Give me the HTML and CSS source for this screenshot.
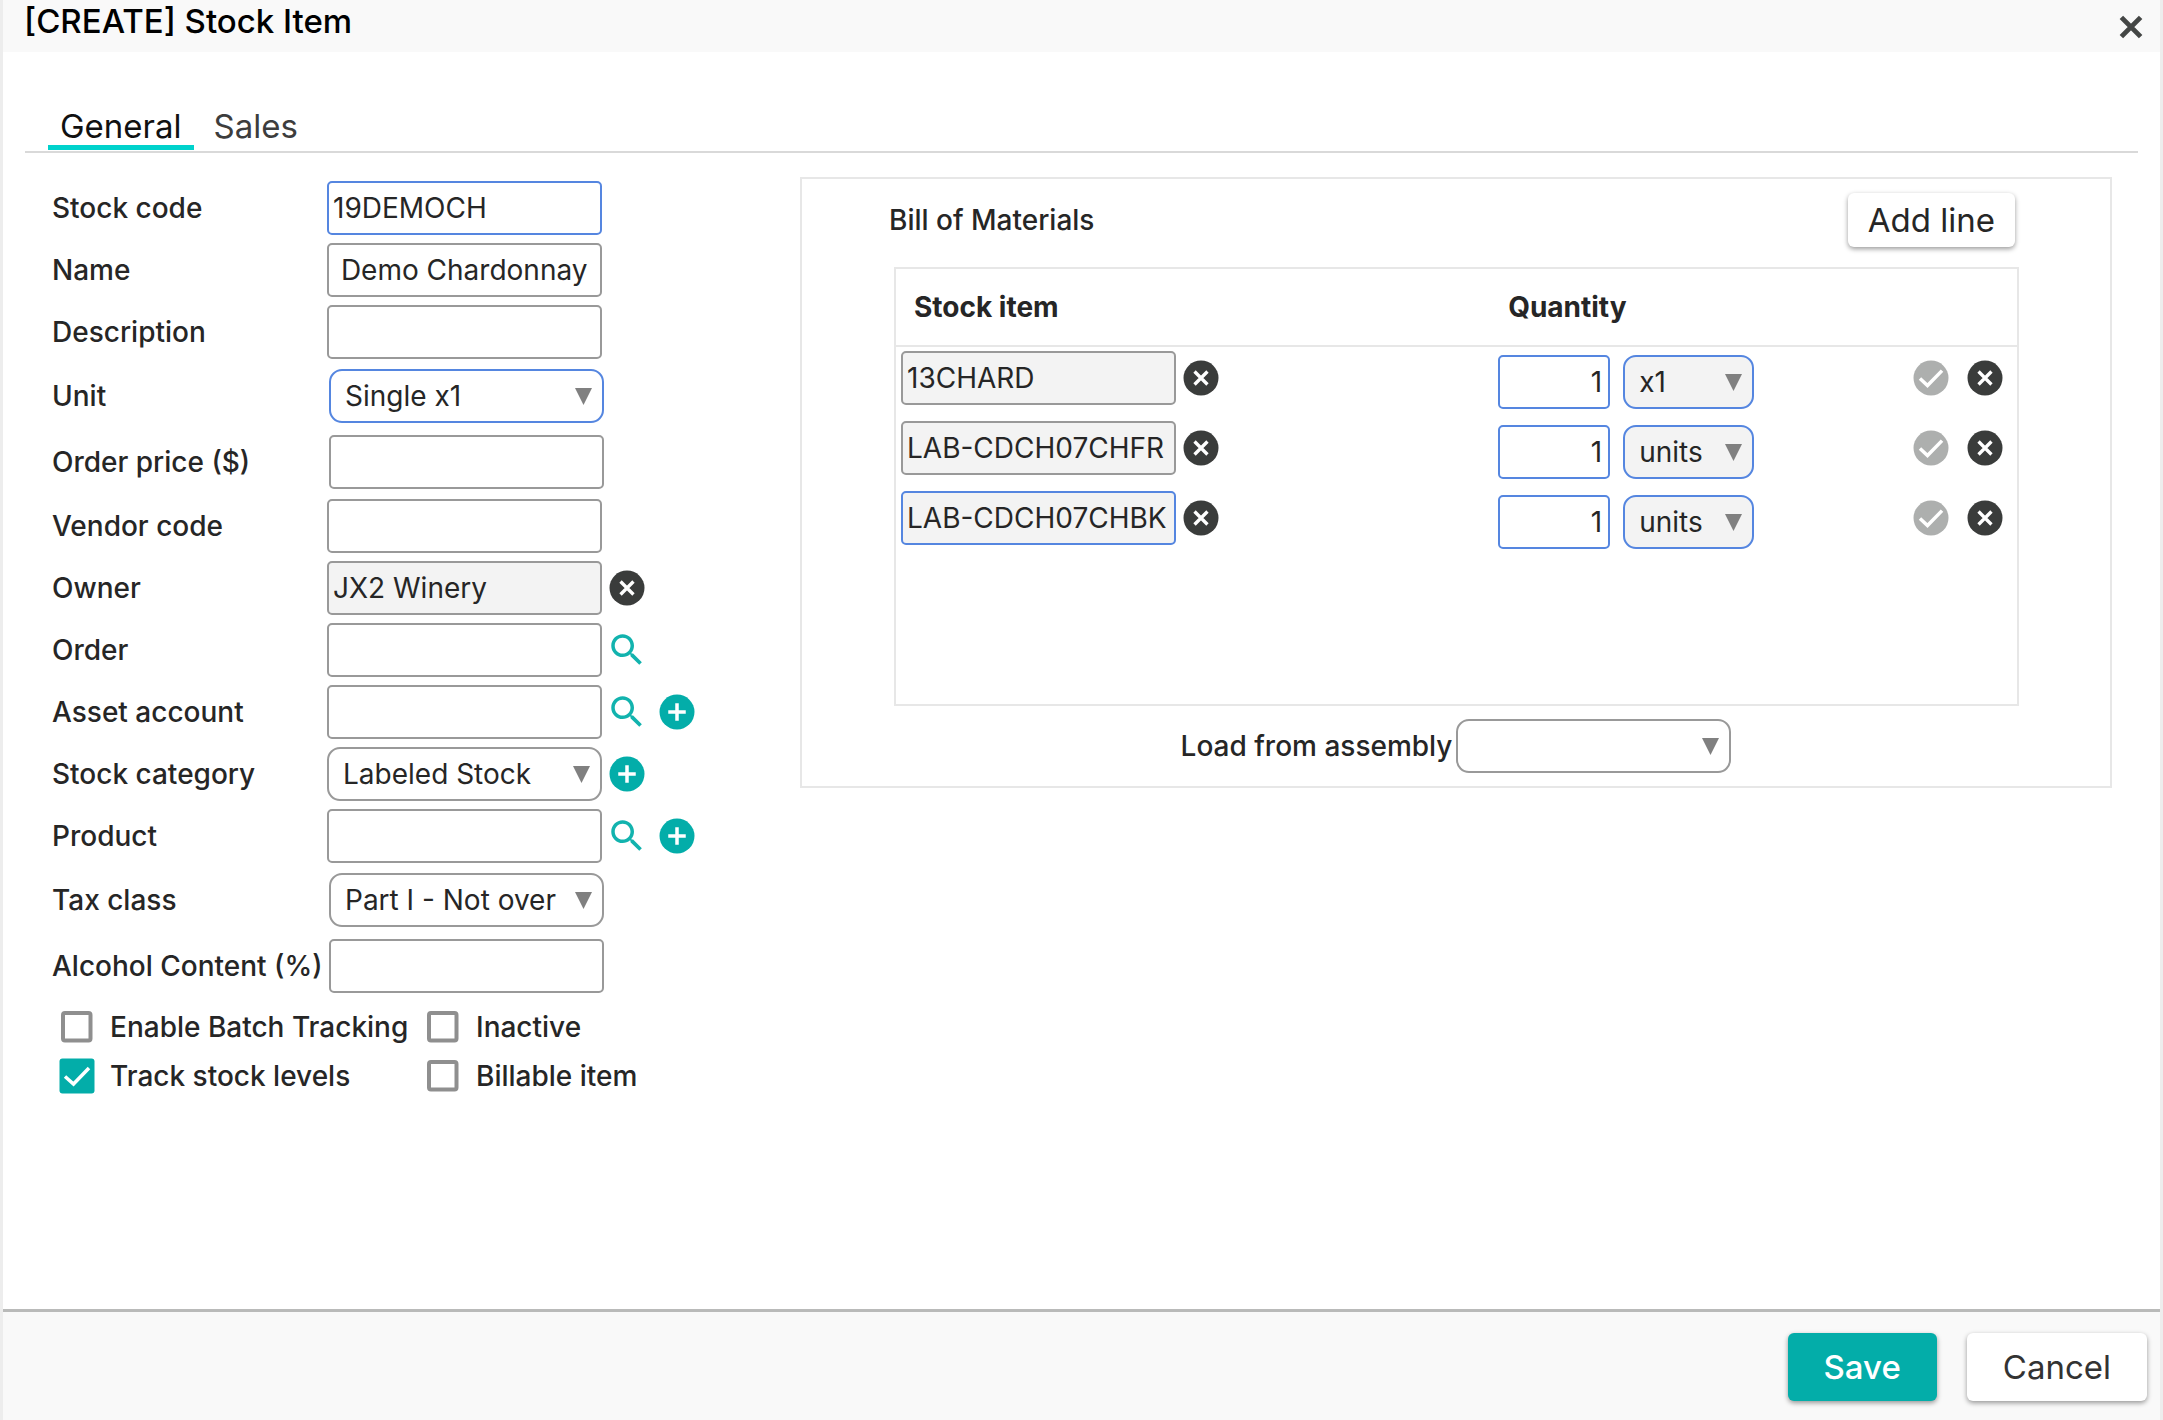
FILE: index.html
```
<!DOCTYPE html>
<html lang="en">
<head>
<meta charset="utf-8">
<meta name="viewport" content="width=device-width, initial-scale=1">
<title>[CREATE] Stock Item</title>
<link rel="stylesheet" href="styles.css">
</head>
<body>
<svg class="sprite" aria-hidden="true">
  <symbol id="i-clear" viewBox="0 0 24 24"><circle cx="12" cy="12" r="10" fill="#3a3c3b"/><path d="M8.300 8.300l7.400 7.400M15.700 8.300l-7.400 7.400" stroke="#fff" stroke-width="1.900" fill="none"/></symbol>
  <symbol id="i-plus" viewBox="0 0 24 24"><circle cx="12" cy="12" r="10" fill="#03ada9"/><path d="M12 7v10M7 12h10" stroke="#fff" stroke-width="2" fill="none"/></symbol>
  <symbol id="i-check" viewBox="0 0 24 24"><circle cx="12" cy="12" r="10" fill="#adafae"/><path d="M5.700 12.300L10 16.300L18.300 7.800" stroke="#fff" stroke-width="2" fill="none"/></symbol>
  <symbol id="i-search" viewBox="0 0 24 24"><path fill="#12b3ae" d="M15.500 14h-.79l-.28-.27C15.410 12.590 16 11.110 16 9.500 16 5.910 13.090 3 9.500 3S3 5.910 3 9.500 5.910 16 9.500 16c1.610 0 3.090-.59 4.230-1.570l.27.28v.79l5 4.990L20.490 19l-4.990-5zm-6 0C7.010 14 5 11.990 5 9.500S7.010 5 9.500 5 14 7.010 14 9.500 11.990 14 9.500 14z"/></symbol>
  <symbol id="i-close" viewBox="0 0 24 24"><path d="M6.500 6.500l11 11M17.500 6.500L6.500 17.500" stroke="#444645" stroke-width="2.800" fill="none"/></symbol>
</svg>
<div class="dialog">
  <header class="titlebar">
    <h1>[CREATE] Stock Item</h1>
    <button class="icon-btn close" type="button" aria-label="Close"><svg><use href="#i-close"/></svg></button>
  </header>

  <nav class="tabs">
    <button class="tab active" type="button">General</button>
    <button class="tab" type="button">Sales</button>
  </nav>

  <main class="content">
    <form class="fields">
      <div class="row"><label for="code">Stock code</label><input class="box focus" id="code" type="text" value="19DEMOCH"></div>
      <div class="row"><label for="name">Name</label><input class="box" id="name" type="text" value=" Demo Chardonnay"></div>
      <div class="row"><label for="desc">Description</label><input class="box" id="desc" type="text"></div>
      <div class="row inset"><label for="unit">Unit</label><select class="box pick focus" id="unit"><option>Single x1</option></select></div>
      <div class="row inset"><label for="price">Order price ($)</label><input class="box" id="price" type="text"></div>
      <div class="row"><label for="vendor">Vendor code</label><input class="box" id="vendor" type="text"></div>
      <div class="row"><label for="owner">Owner</label><input class="box filled" id="owner" type="text" value="JX2 Winery" readonly>
        <span class="tools"><button class="icon-btn" type="button" aria-label="Clear owner"><svg><use href="#i-clear"/></svg></button></span></div>
      <div class="row"><label for="order">Order</label><input class="box" id="order" type="text">
        <span class="tools"><button class="icon-btn" type="button" aria-label="Find order"><svg><use href="#i-search"/></svg></button></span></div>
      <div class="row"><label for="asset">Asset account</label><input class="box" id="asset" type="text">
        <span class="tools"><button class="icon-btn" type="button" aria-label="Find account"><svg><use href="#i-search"/></svg></button><button class="icon-btn" type="button" aria-label="Add account"><svg><use href="#i-plus"/></svg></button></span></div>
      <div class="row"><label for="category">Stock category</label><select class="box pick" id="category"><option>Labeled Stock</option></select>
        <span class="tools"><button class="icon-btn" type="button" aria-label="Add category"><svg><use href="#i-plus"/></svg></button></span></div>
      <div class="row"><label for="product">Product</label><input class="box" id="product" type="text">
        <span class="tools"><button class="icon-btn" type="button" aria-label="Find product"><svg><use href="#i-search"/></svg></button><button class="icon-btn" type="button" aria-label="Add product"><svg><use href="#i-plus"/></svg></button></span></div>
      <div class="row inset"><label for="tax">Tax class</label><select class="box pick" id="tax"><option>Part I - Not over</option></select></div>
      <div class="row inset"><label for="alcohol">Alcohol Content (%)</label><input class="box" id="alcohol" type="text"></div>
      <div class="checks">
        <label><input type="checkbox">Enable Batch Tracking</label>
        <label><input type="checkbox">Inactive</label>
        <label><input type="checkbox" checked>Track stock levels</label>
        <label><input type="checkbox">Billable item</label>
      </div>
    </form>

    <section class="panel">
      <div class="panel-head">
        <h2>Bill of Materials</h2>
        <button class="btn small" type="button">Add line</button>
      </div>
      <div class="grid-box">
        <table>
          <thead><tr><th class="c-item">Stock item</th><th class="c-qty">Quantity</th><th class="c-act"></th></tr></thead>
          <tbody>
            <tr>
              <td><div class="cell"><input class="box filled" type="text" value="13CHARD" aria-label="Stock item" readonly><button class="icon-btn" type="button" aria-label="Clear item"><svg><use href="#i-clear"/></svg></button></div></td>
              <td><div class="cell qty"><input class="box focus num" type="text" value="1" aria-label="Quantity"><select class="box pick filled focus unit" aria-label="Unit"><option>x1</option></select></div></td>
              <td><div class="cell act"><button class="icon-btn" type="button" aria-label="Confirm"><svg><use href="#i-check"/></svg></button><button class="icon-btn" type="button" aria-label="Remove line"><svg><use href="#i-clear"/></svg></button></div></td>
            </tr>
            <tr>
              <td><div class="cell"><input class="box filled" type="text" value="LAB-CDCH07CHFR" aria-label="Stock item" readonly><button class="icon-btn" type="button" aria-label="Clear item"><svg><use href="#i-clear"/></svg></button></div></td>
              <td><div class="cell qty"><input class="box focus num" type="text" value="1" aria-label="Quantity"><select class="box pick filled focus unit" aria-label="Unit"><option>units</option></select></div></td>
              <td><div class="cell act"><button class="icon-btn" type="button" aria-label="Confirm"><svg><use href="#i-check"/></svg></button><button class="icon-btn" type="button" aria-label="Remove line"><svg><use href="#i-clear"/></svg></button></div></td>
            </tr>
            <tr>
              <td><div class="cell"><input class="box filled focus" type="text" value="LAB-CDCH07CHBK" aria-label="Stock item" readonly><button class="icon-btn" type="button" aria-label="Clear item"><svg><use href="#i-clear"/></svg></button></div></td>
              <td><div class="cell qty"><input class="box focus num" type="text" value="1" aria-label="Quantity"><select class="box pick filled focus unit" aria-label="Unit"><option>units</option></select></div></td>
              <td><div class="cell act"><button class="icon-btn" type="button" aria-label="Confirm"><svg><use href="#i-check"/></svg></button><button class="icon-btn" type="button" aria-label="Remove line"><svg><use href="#i-clear"/></svg></button></div></td>
            </tr>
          </tbody>
        </table>
      </div>
      <div class="assembly"><label for="assembly">Load from assembly</label><select class="box pick" id="assembly"><option></option></select></div>
    </section>
  </main>

  <footer class="actions">
    <button class="btn primary" type="button">Save</button>
    <button class="btn" type="button">Cancel</button>
  </footer>
</div>
</body>
</html>
```
FILE: styles.css
```
* { box-sizing: border-box; }

body {
  margin: 0;
  background: #fff;
  color: #262626;
  font: 500 28px/32px Inter, "Liberation Sans", sans-serif;
}

button, input, select { font: inherit; color: inherit; margin: 0; }
button { border: 0; padding: 0; background: none; cursor: pointer; }
h1, h2 { margin: 0; font-weight: 500; }
.sprite { display: none; }

.dialog {
  display: flex;
  flex-direction: column;
  min-height: 100vh;
  border: solid #ededed;
  border-width: 0 3px;
}

/* title bar */
.titlebar {
  display: flex;
  justify-content: space-between;
  align-items: flex-start;
  height: 52px;
  padding: 0 8px 0 21px;
  background: #f9f9f9;
}
.titlebar h1 { font-size: 33px; line-height: 42px; color: #000; }
.close { margin-top: 6px; }

.icon-btn { flex: none; width: 42px; height: 42px; }
.icon-btn svg { display: block; width: 42px; height: 42px; }

/* tabs */
.tabs {
  display: flex;
  gap: 8px;
  margin: 48px 22px 0;
  padding: 0 23px 1px;
  border-bottom: 2px solid #d9d9d9;
}
.tab {
  height: 50px;
  padding: 6px 12px 0;
  border-bottom: 5px solid transparent;
  font-size: 33px;
  font-weight: 400;
  color: #3d3d3d;
}
.tab.active { border-color: #00d2cc; color: #111; }

.content {
  flex: 1;
  display: grid;
  grid-template-columns: 748px minmax(0, 1fr);
  align-items: start;
  padding: 24px 48px 24px 49px;
}

/* inputs */
.box {
  flex: none;
  width: 275px;
  height: 54px;
  padding: 0 4px;
  border: 2px solid #999;
  border-radius: 5px;
  background-color: #fff;
  font-weight: 400;
  outline: 0;
}
.box.focus { border-color: #5586e0; }
.box.filled { background-color: #f3f3f3; }
.pick {
  appearance: none;
  padding: 0 32px 0 14px;
  border-radius: 13px;
  background-image: url("data:image/svg+xml,%3Csvg xmlns='http://www.w3.org/2000/svg' viewBox='0 0 17 17'%3E%3Cpath d='M0 0h17L8.500 17z' fill='%23808080'/%3E%3C/svg%3E");
  background-repeat: no-repeat;
  background-position: right 10px center;
  background-size: 17px 17px;
}

/* form */
.fields { display: flex; flex-direction: column; gap: 8px; padding-top: 4px; }
.row { display: flex; align-items: center; }
.row > label { flex: none; width: 275px; white-space: nowrap; }
.row.inset .box { margin: 2px; }
.tools { display: flex; gap: 8px; margin-left: 4px; }

.checks {
  display: grid;
  grid-template-columns: 366px max-content;
  gap: 7px 0;
  padding: 3px 0 0 4px;
}
.checks label { display: flex; align-items: center; gap: 12px; white-space: nowrap; }
.checks input {
  appearance: none;
  flex: none;
  width: 42px;
  height: 42px;
  background: url("data:image/svg+xml,%3Csvg xmlns='http://www.w3.org/2000/svg' viewBox='0 0 42 42'%3E%3Crect x='7' y='7' width='27.500' height='27.500' rx='2' fill='%23fff' stroke='%238f8f8f' stroke-width='4'/%3E%3C/svg%3E");
}
.checks input:checked {
  background-image: url("data:image/svg+xml,%3Csvg xmlns='http://www.w3.org/2000/svg' viewBox='0 0 42 42'%3E%3Crect x='3.500' y='3.500' width='35' height='35' rx='3' fill='%2303ada9'/%3E%3Cpath d='M9 21.500L17.500 29L33 13' fill='none' stroke='%23fff' stroke-width='3.500'/%3E%3C/svg%3E");
}

/* bill of materials */
.panel { border: 2px solid #e7e7e7; padding: 14px 0 13px; }
.panel-head {
  display: flex;
  justify-content: space-between;
  align-items: center;
  margin: 0 95px 20px 87px;
}
.panel-head h2 { font-size: 28px; }
.grid-box { min-height: 439px; margin: 0 91px 13px 92px; border: 2px solid #e7e7e7; }
table { width: 100%; table-layout: fixed; border-collapse: separate; border-spacing: 0; }
th {
  height: 78px;
  padding: 0 18px;
  border-bottom: 2px solid #e7e7e7;
  text-align: left;
  font-weight: 700;
}
.c-item { width: 53%; }
.c-qty { width: 30%; }
td { height: 70px; padding: 0; vertical-align: top; }
.cell { display: flex; align-items: center; gap: 4px; padding: 4px 0 0 5px; }
.cell.qty { gap: 13px; padding: 8px 0 0 8px; }
.cell.act { gap: 12px; padding: 10px 11px 0 0; justify-content: flex-end; }
.num { width: 112px; padding: 0 6px; text-align: right; }
.unit { width: 131px; }

.assembly { display: flex; align-items: center; justify-content: center; gap: 4px; }

/* buttons */
.btn {
  height: 68px;
  padding: 0 36px;
  border-radius: 6px;
  background: #fff;
  box-shadow: 0 2px 5px rgba(0, 0, 0, .4);
  font-size: 33px;
  font-weight: 400;
  color: #333;
}
.btn.small { height: 54px; padding: 0 20px; color: #262626; }
.btn.primary { background: #03ada9; color: #fff; font-weight: 500; }

.actions {
  display: flex;
  justify-content: flex-end;
  gap: 30px;
  padding: 21px 13px 19px;
  border-top: 3px solid #b9bab9;
  background: #f9f9f9;
}
```
